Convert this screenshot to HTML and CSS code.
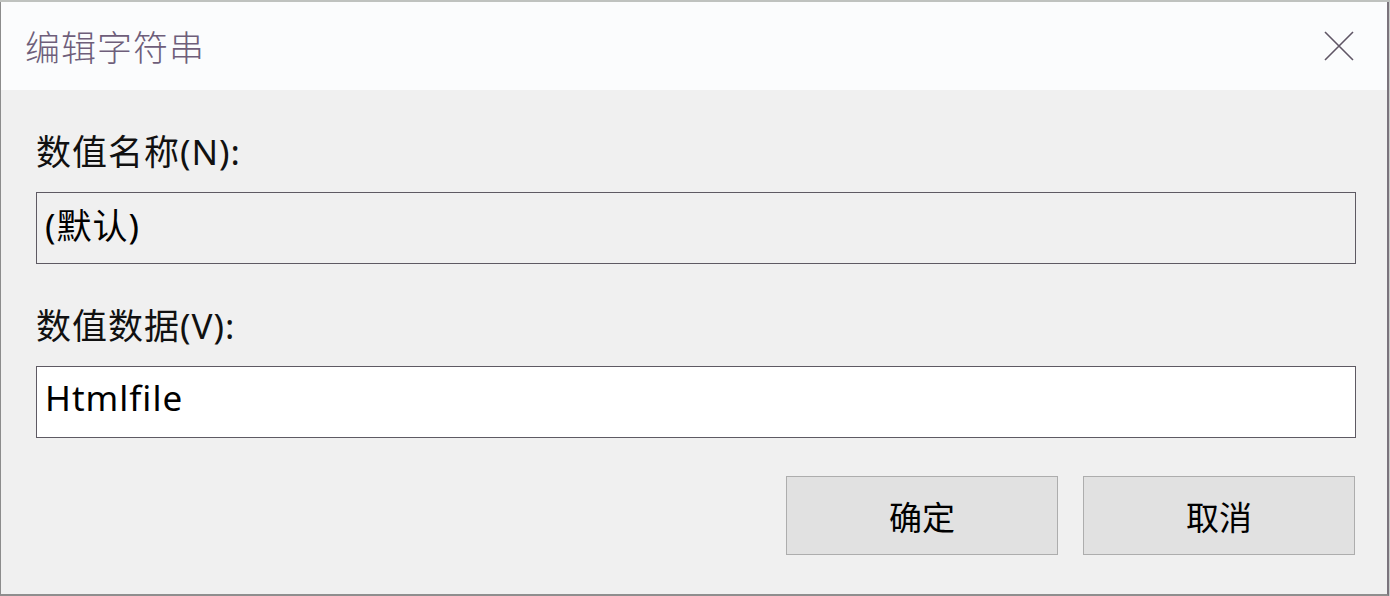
FILE: index.html
```html
<!DOCTYPE html>
<html lang="zh-CN">
<head>
<meta charset="utf-8">
<title>编辑字符串</title>
<link rel="stylesheet" href="styles.css">
</head>
<body>
<div class="backdrop"></div>
<div class="window">
  <div class="titlebar">
    <span class="title">编辑字符串</span>
    <span class="close" aria-label="关闭">
      <svg width="32" height="32" viewBox="0 0 32 32"><path d="M2 2 L30 30 M30 2 L2 30" stroke="#5f5565" stroke-width="1.6" fill="none"/></svg>
    </span>
  </div>
  <div class="content">
    <div class="label">数值名称(N):</div>
    <div class="field readonly">(默认)</div>
    <div class="label second">数值数据(V):</div>
    <div class="field editable">Htmlfile</div>
    <div class="buttons">
      <div class="btn">确定</div>
      <div class="btn">取消</div>
    </div>
  </div>
</div>
</body>
</html>
```
FILE: styles.css
```css
html, body {
  margin: 0;
  padding: 0;
}
body {
  width: 1390px;
  height: 596px;
  overflow: hidden;
  background: #c9cbc9;
  font-family: "Noto Sans", "Noto Sans CJK SC", sans-serif;
}
.backdrop {
  height: 2px;
  background: #bfc2bf;
}
.window {
  width: 1389px;
  box-sizing: border-box;
  border-left: 1px solid #8c8c8c;
  border-right: 2px solid #7a737c;
  border-bottom: 2px solid #8e8e8e;
  background: #f0f0f0;
}
.titlebar {
  height: 88px;
  background: #fbfcfd;
  display: flex;
  align-items: center;
  justify-content: space-between;
  padding: 0 32px 0 24px;
}
.title {
  font-family: "Noto Sans CJK SC", sans-serif;
  font-weight: 300;
  font-size: 35px;
  color: #6e5e7a;
  letter-spacing: 1px;
  margin-top: -2px;
}
.close {
  display: flex;
  width: 32px;
  height: 32px;
}
.content {
  background: #f0f0f0;
  padding: 40px 32px 39px 35px;
  display: flex;
  flex-direction: column;
}
.label {
  font-size: 35px;
  line-height: 44px;
  letter-spacing: 1px;
  color: #111;
}
.label.second {
  margin-top: 40px;
}
.field {
  margin-top: 18px;
  height: 72px;
  box-sizing: border-box;
  border: 1px solid #5e5a63;
  display: flex;
  align-items: center;
  padding: 0 0 9px 8px;
  font-size: 35px;
  letter-spacing: 1px;
  color: #000;
  width: 1320px;
}
.field.readonly {
  background: #f0f0f0;
}
.field.editable {
  background: #ffffff;
}
.buttons {
  margin-top: 38px;
  display: flex;
  justify-content: flex-end;
  gap: 25px;
  width: 1319px;
}
.btn {
  width: 272px;
  height: 79px;
  box-sizing: border-box;
  background: #e1e1e1;
  border: 1px solid #adadad;
  display: flex;
  align-items: center;
  justify-content: center;
  font-family: "Noto Sans CJK SC", sans-serif;
  font-size: 33px;
  color: #000;
}
```
